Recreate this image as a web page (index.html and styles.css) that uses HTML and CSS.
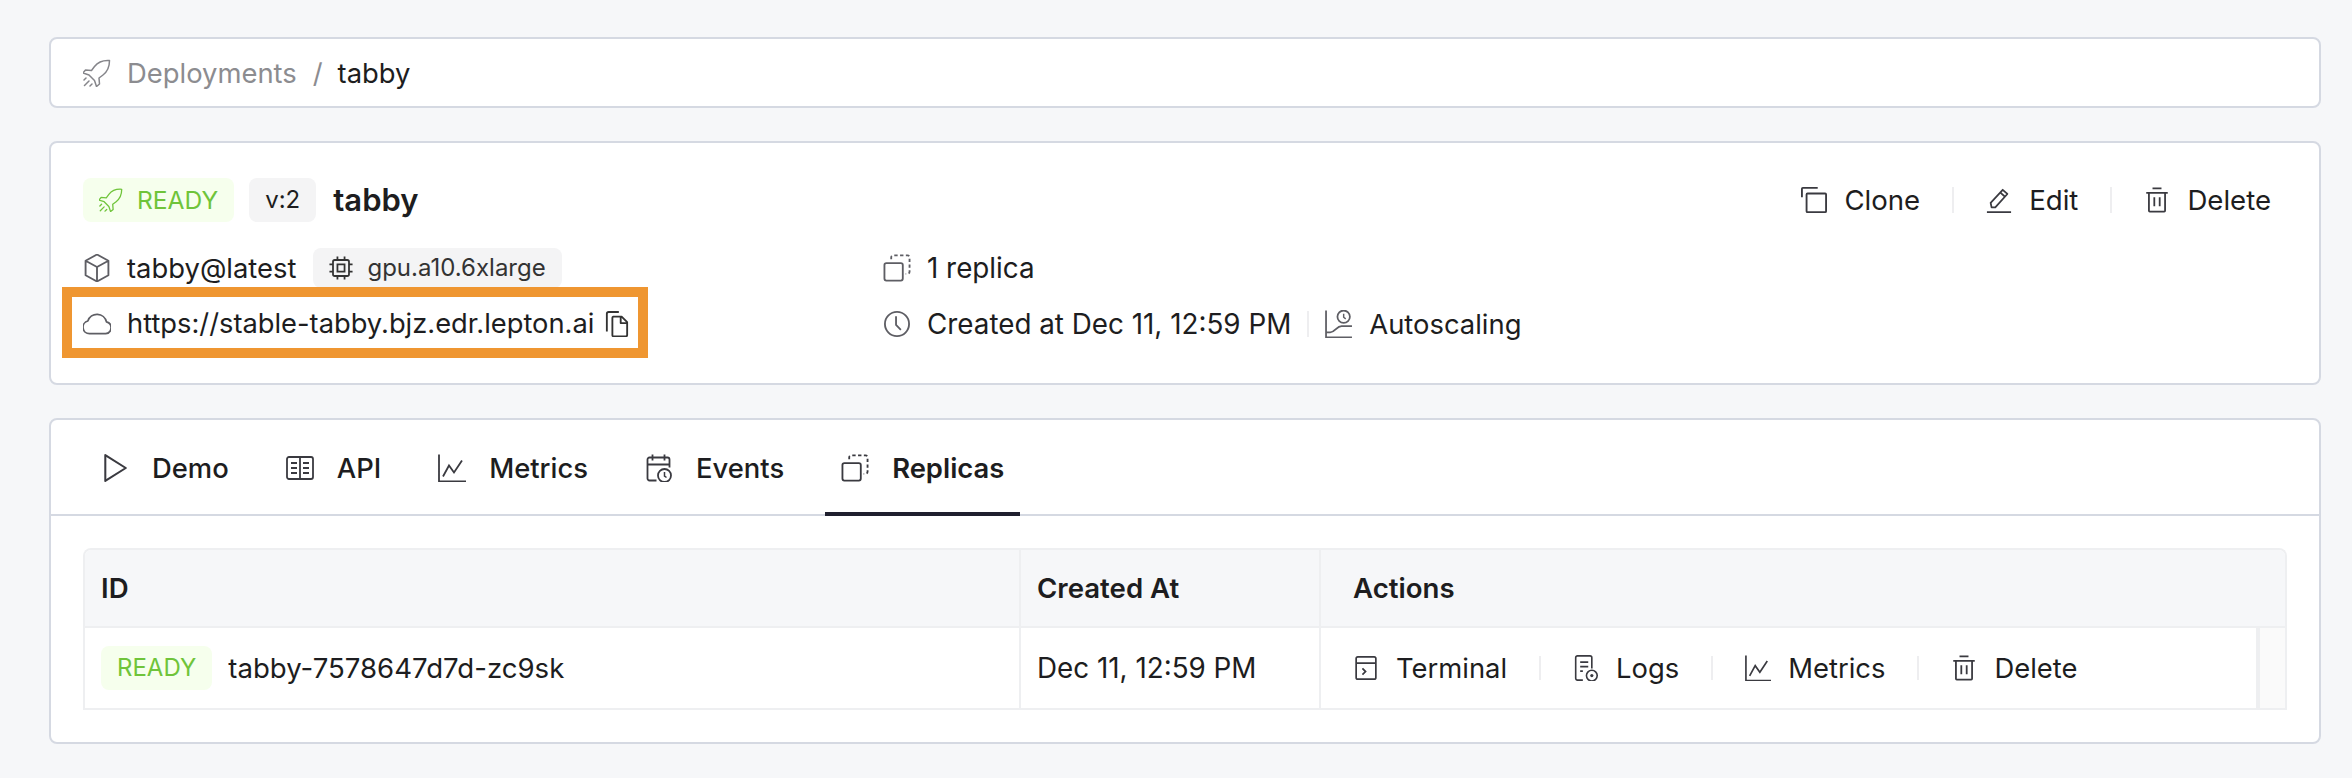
FILE: index.html
```html
<!DOCTYPE html>
<html lang="en">
<head>
<meta charset="utf-8">
<title>tabby</title>
<link rel="stylesheet" href="styles.css">
</head>
<body>
<svg class="defs" width="0" height="0" aria-hidden="true">
  <symbol id="rocket" viewBox="2 2 28 28"><path d="M28.500 3.500c-6.500-.5-11.500 1.500-15 6l-3 4-6-.5-2.500 3 6 2 5.500 5.500 2 6 3-2.500-.5-6 4-3c4.500-3.500 6.500-8.500 6.500-14.500zM8 24l-4.500 4.500M11 27l-2 2M5 21l-2 2" fill="none" stroke="currentColor" stroke-width="1.500" stroke-linejoin="round" stroke-linecap="round"/></symbol>
  <symbol id="box" viewBox="3 2.500 26 27"><path d="M16 3l11 6v14l-11 6-11-6V9zM5 9l11 6 11-6M16 15v14" fill="none" stroke="currentColor" stroke-width="1.800" stroke-linejoin="round"/></symbol>
  <symbol id="chip" viewBox="2.500 2.500 27 27"><path d="M9 7h14a2 2 0 0 1 2 2v14a2 2 0 0 1-2 2H9a2 2 0 0 1-2-2V9a2 2 0 0 1 2-2zM12 12h8v8h-8zM12 3v4M20 3v4M12 25v4M20 25v4M3 12h4M3 20h4M25 12h4M25 20h4" fill="none" stroke="currentColor" stroke-width="2"/></symbol>
  <symbol id="cloud" viewBox="3 4 26 24"><path d="M9 25a6 6 0 0 1-1.500-11.800A9 9 0 0 1 24.800 14 5.600 5.600 0 0 1 24 25z" fill="none" stroke="currentColor" stroke-width="1.600" stroke-linejoin="round"/></symbol>
  <symbol id="copyfile" viewBox="3 2 26 28"><path d="M5 24V5a2 2 0 0 1 2-2h11M12 8h9l6 6v14a1.500 1.500 0 0 1-1.500 1.500h-13.500A1.500 1.500 0 0 1 11 28V9.500A1.500 1.500 0 0 1 12 8zM20 8v7h7" fill="none" stroke="currentColor" stroke-width="2" stroke-linejoin="round"/></symbol>
  <symbol id="replica" viewBox="1.500 1.500 29 29"><path d="M5 11h15a2 2 0 0 1 2 2v14a2 2 0 0 1-2 2H5a2 2 0 0 1-2-2V13a2 2 0 0 1 2-2z" fill="none" stroke="currentColor" stroke-width="1.900"/><path d="M10 7V5a2 2 0 0 1 2-2h15a2 2 0 0 1 2 2v15a2 2 0 0 1-2 2h-2" fill="none" stroke="currentColor" stroke-width="1.900" stroke-dasharray="3.500 2.500"/></symbol>
  <symbol id="clock" viewBox="1.500 1.500 29 29"><circle cx="16" cy="16" r="12.500" fill="none" stroke="currentColor" stroke-width="1.900"/><path d="M15 8v9l5 5" fill="none" stroke="currentColor" stroke-width="1.900"/></symbol>
  <symbol id="autoscale" viewBox="3 2.500 27 27"><path d="M4 3v26h25M4 24h4c5 0 6-6 11-6h10" fill="none" stroke="currentColor" stroke-width="1.700"/><circle cx="21" cy="9" r="6" fill="none" stroke="currentColor" stroke-width="1.700"/><path d="M21 6v3.500l2 1.500" fill="none" stroke="currentColor" stroke-width="1.400"/></symbol>
  <symbol id="clone" viewBox="2 2 28 28"><path d="M3 13V4a1 1 0 0 1 1-1h16" fill="none" stroke="currentColor" stroke-width="2"/><rect x="8" y="9" width="21" height="20" rx="1" fill="none" stroke="currentColor" stroke-width="2"/></symbol>
  <symbol id="edit" viewBox="2 2 28 28"><path d="M3 29h26M8 24l-1-5L20 5l5 4.500L12 24zM17.500 8l5 4.500" fill="none" stroke="currentColor" stroke-width="1.900" stroke-linejoin="round"/></symbol>
  <symbol id="trash" viewBox="1.500 1.500 29 29"><path d="M4 8h24M11 3h10M7 8v20a1 1 0 0 0 1 1h16a1 1 0 0 0 1-1V8M13 13v10M19 13v10" fill="none" stroke="currentColor" stroke-width="2"/></symbol>
  <symbol id="play" viewBox="3 3 26 26"><path d="M7 4l19 12L7 28z" fill="none" stroke="currentColor" stroke-width="1.900" stroke-linejoin="round"/></symbol>
  <symbol id="book" viewBox="2 3 28 26"><rect x="3" y="5" width="26" height="22" rx="2" fill="none" stroke="currentColor" stroke-width="1.800"/><path d="M16 5v22M7 11h6M7 16h6M7 21h6M19 11h6M19 16h6M19 21h6" fill="none" stroke="currentColor" stroke-width="1.800"/></symbol>
  <symbol id="chart" viewBox="2 1.500 28 28"><path d="M3 2v27h27M7 24l6-11 5 7 8-12" fill="none" stroke="currentColor" stroke-width="1.800"/></symbol>
  <symbol id="events" viewBox="3 1.500 27 28"><path d="M14 28H7a2 2 0 0 1-2-2V7a2 2 0 0 1 2-2h18a2 2 0 0 1 2 2v8M10 2v6M22 2v6M5 12h22" fill="none" stroke="currentColor" stroke-width="1.800"/><circle cx="22" cy="23" r="6.500" fill="none" stroke="currentColor" stroke-width="1.800"/><path d="M22 19.500v4l2 1.500" fill="none" stroke="currentColor" stroke-width="1.500"/></symbol>
  <symbol id="terminal" viewBox="1.500 2 29 29"><rect x="5" y="4" width="22" height="25" rx="2" fill="none" stroke="currentColor" stroke-width="1.900"/><path d="M5 11h22M12 17l3.500 3.500L12 24" fill="none" stroke="currentColor" stroke-width="1.900"/></symbol>
  <symbol id="logs" viewBox="3 1 27 29"><path d="M13 29H7a2 2 0 0 1-2-2V4a2 2 0 0 1 2-2h14a2 2 0 0 1 2 2v12M10 9h9M10 14h9M10 19h3" fill="none" stroke="currentColor" stroke-width="1.800"/><circle cx="23" cy="24" r="6" fill="none" stroke="currentColor" stroke-width="1.800"/><circle cx="23" cy="24" r="1.800" fill="currentColor"/></symbol>
</svg>

<main class="page">
  <nav class="card crumbs">
    <svg class="ico muted"><use href="#rocket"/></svg>
    <span class="crumb-link">Deployments</span>
    <span class="crumb-sep">/</span>
    <span class="crumb-now">tabby</span>
  </nav>

  <section class="card detail">
    <div class="title-row">
      <span class="tag tag-ready tag-top"><svg class="ico-sm"><use href="#rocket"/></svg>READY</span>
      <span class="tag tag-grey">v:2</span>
      <h1 class="name">tabby</h1>
      <div class="actions">
        <span class="act"><svg class="ico"><use href="#clone"/></svg>Clone</span>
        <i class="sep"></i>
        <span class="act"><svg class="ico"><use href="#edit"/></svg>Edit</span>
        <i class="sep"></i>
        <span class="act"><svg class="ico"><use href="#trash"/></svg>Delete</span>
      </div>
    </div>
    <div class="info">
      <div class="info-col col-a">
        <div class="info-row"><svg class="ico dim"><use href="#box"/></svg>tabby@latest<span class="tag tag-grey tag-chip"><svg class="ico-sm"><use href="#chip"/></svg>gpu.a10.6xlarge</span></div>
        <div class="info-row url"><svg class="ico dim"><use href="#cloud"/></svg>https://stable-tabby.bjz.edr.lepton.ai<svg class="ico-sm copy"><use href="#copyfile"/></svg></div>
      </div>
      <div class="info-col">
        <div class="info-row stamp"><svg class="ico dim"><use href="#replica"/></svg>1 replica</div>
        <div class="info-row"><svg class="ico dim"><use href="#clock"/></svg><span class="stamp">Created at Dec 11, 12:59 PM</span><i class="sep sep-info"></i><svg class="ico dim"><use href="#autoscale"/></svg>Autoscaling</div>
      </div>
    </div>
    <div class="highlight"></div>
  </section>

  <section class="card panel">
    <div class="tabs">
      <span class="tab"><svg class="ico"><use href="#play"/></svg>Demo</span>
      <span class="tab"><svg class="ico"><use href="#book"/></svg>API</span>
      <span class="tab"><svg class="ico"><use href="#chart"/></svg>Metrics</span>
      <span class="tab"><svg class="ico"><use href="#events"/></svg>Events</span>
      <span class="tab tab-on"><svg class="ico"><use href="#replica"/></svg>Replicas</span>
    </div>
    <div class="table">
      <div class="cell head c-id">ID</div>
      <div class="cell head c-at">Created At</div>
      <div class="cell head c-act">Actions</div>
      <div class="cell c-id c-name"><span class="tag tag-ready">READY</span>tabby-7578647d7d-zc9sk</div>
      <div class="cell c-at stamp">Dec 11, 12:59 PM</div>
      <div class="cell c-act">
        <span class="act"><svg class="ico-md"><use href="#terminal"/></svg>Terminal</span>
        <i class="sep"></i>
        <span class="act"><svg class="ico-md"><use href="#logs"/></svg>Logs</span>
        <i class="sep"></i>
        <span class="act"><svg class="ico-md"><use href="#chart"/></svg>Metrics</span>
        <i class="sep"></i>
        <span class="act"><svg class="ico-md"><use href="#trash"/></svg>Delete</span>
      </div>
      <div class="cell c-gutter"></div>
    </div>
  </section>
</main>
</body>
</html>
```

FILE: styles.css
```css
* { box-sizing: border-box; }
html, body { margin: 0; padding: 0; }
body {
  background: #f6f7f9;
  color: #1d1d20;
  font-family: Inter, "Liberation Sans", sans-serif;
  font-size: 27.4px;
  line-height: 40px;
}
.defs { position: absolute; }
.page {
  display: flex;
  flex-direction: column;
  gap: 33px;
  padding: 37px 31px 0 49px;
}
.card {
  background: #fff;
  border: 2px solid #d5d9e2;
  border-radius: 8px;
  position: relative;
}
.ico { width: 28px; height: 28px; flex: none; color: #3a3a40; }
.ico-sm { width: 24px; height: 24px; flex: none; }
.ico-md { width: 26px; height: 26px; flex: none; color: #3a3a40; }
.ico.muted { color: #85858a; }
.ico.dim { color: #5e5e64; }
.stamp { font-size: 27.800px; }

.crumbs {
  display: flex;
  align-items: center;
  height: 71px;
  padding-left: 32px;
}
.crumb-link { color: #8c8c90; margin-left: 16px; }
.crumb-sep { color: #8c8c90; margin: 0 15px 0 16px; }

.detail { height: 244px; padding: 35px 48px 0 32px; }
.title-row { display: flex; align-items: center; height: 44px; }
.tag {
  display: inline-flex;
  align-items: center;
  height: 44px;
  padding: 0 16px;
  border-radius: 8px;
  font-size: 24px;
}
.tag-ready { background: #f6ffed; color: #6fc43a; gap: 14px; }
.tag-top { font-size: 24.600px; }
.tag-grey { background: #f4f4f5; margin-left: 15px; padding: 0 16px; }
.name { font-size: 31px; font-weight: 600; line-height: 44px; margin: 0 0 0 17px; }
.actions { margin-left: auto; display: flex; align-items: center; font-size: 27.600px; }
.actions .ico { width: 26px; height: 26px; }
.actions .act { gap: 17px; }
.act { display: inline-flex; align-items: center; gap: 16px; }
.sep { width: 2px; height: 26px; background: #eeeef0; margin: 0 32px; flex: none; }

.info { display: flex; margin-top: 18px; }
.col-a { width: 800px; }
.info-row { display: flex; align-items: center; height: 56px; }
.info-row > .ico { margin-right: 16px; }
.url { font-size: 27.300px; }
.tag-chip { height: 40px; margin-left: 17px; gap: 14px; color: #333; }
.tag-chip .ico-sm { color: #333; }
.copy { width: 24px; height: 26px; margin-left: 11px; color: #333; }
.sep-info { margin: 0 16px; }
.highlight {
  position: absolute;
  left: 11px;
  top: 144px;
  width: 586px;
  height: 71px;
  border: 10px solid #ef9631;
}

.panel { height: 326px; padding-bottom: 32px; }
.tabs {
  display: flex;
  height: 96px;
  padding-left: 34px;
  gap: 25px;
  border-bottom: 2px solid #d5d9e2;
  font-weight: 500;
}
.tab {
  display: inline-flex;
  align-items: center;
  gap: 23px;
  height: 96px;
  padding: 0 16px;
  margin-bottom: -2px;
}
.tab-on { border-top: 4px solid transparent; border-bottom: 4px solid #1f1f2e; font-weight: 600; }
.table {
  display: grid;
  grid-template-columns: 936px 300px 939px 1fr;
  grid-template-rows: 78px 82px;
  margin: 32px 32px 0;
  border: 2px solid #eeeff1;
  border-bottom: 0;
  border-radius: 8px 8px 0 0;
  overflow: hidden;
}
.cell {
  display: flex;
  align-items: center;
  padding-left: 16px;
  border-bottom: 2px solid #eeeff1;
  background: #fff;
}
.head { background: #f6f7f9; font-weight: 600; font-size: 27.600px; }
.c-id { border-right: 2px solid #eeeff1; gap: 16px; }
.c-name { font-size: 27.600px; }
.c-at { border-right: 2px solid #eeeff1; }
.c-act { padding-left: 32px; }
.cell.c-act { border-right: 4px solid #eeeff1; }
.head.c-act { grid-column: 3 / 5; border-right: 0; }
.cell.c-act .sep { margin: 0 32px; height: 24px; }
.cell.c-act .act { gap: 17px; }
.c-gutter { background: #fafafa; padding: 0; }
```
